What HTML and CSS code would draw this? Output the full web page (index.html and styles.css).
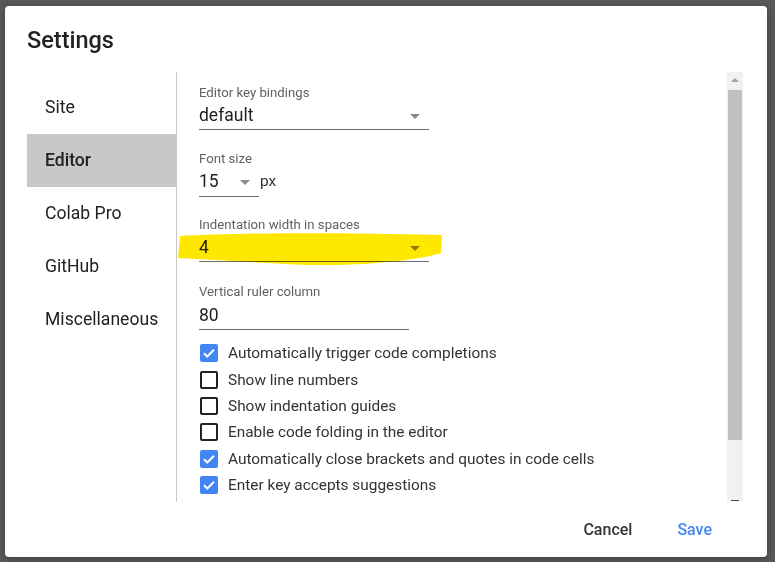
FILE: index.html
```html
<!DOCTYPE html>
<html>
<head>
<meta charset="utf-8">
<link rel="stylesheet" href="styles.css">
</head>
<body>
<div class="backdrop">
  <div class="dialog">
    <h1 class="title">Settings</h1>
    <div class="body">
      <nav class="nav">
        <div class="nav-item">Site</div>
        <div class="nav-item active">Editor</div>
        <div class="nav-item">Colab Pro</div>
        <div class="nav-item">GitHub</div>
        <div class="nav-item">Miscellaneous</div>
      </nav>
      <div class="content">
        <div class="field">
          <div class="label">Editor key bindings</div>
          <div class="select wide"><span>default</span><i class="caret"></i></div>
        </div>
        <div class="field">
          <div class="label">Font size</div>
          <div class="inline">
            <div class="select narrow"><span>15</span><i class="caret"></i></div>
            <span class="unit">px</span>
          </div>
        </div>
        <div class="field">
          <div class="label">Indentation width in spaces</div>
          <div class="select wide"><span>4</span><i class="caret"></i></div>
        </div>
        <div class="field ruler-field">
          <div class="label">Vertical ruler column</div>
          <div class="select ruler"><span>80</span></div>
        </div>
        <div class="checks">
          <label class="check"><span class="box on"><svg viewBox="0 0 18 18"><path d="M4 9.2l3.3 3.3L14 5.8" fill="none" stroke="#fff" stroke-width="2"/></svg></span>Automatically trigger code completions</label>
          <label class="check"><span class="box"></span>Show line numbers</label>
          <label class="check"><span class="box"></span>Show indentation guides</label>
          <label class="check"><span class="box"></span>Enable code folding in the editor</label>
          <label class="check"><span class="box on"><svg viewBox="0 0 18 18"><path d="M4 9.2l3.3 3.3L14 5.8" fill="none" stroke="#fff" stroke-width="2"/></svg></span>Automatically close brackets and quotes in code cells</label>
          <label class="check"><span class="box on"><svg viewBox="0 0 18 18"><path d="M4 9.2l3.3 3.3L14 5.8" fill="none" stroke="#fff" stroke-width="2"/></svg></span>Enter key accepts suggestions</label>
        </div>
        <svg class="highlight" viewBox="0 0 266 36" width="266" height="36"><path d="M3 5 C60 2 150 1 265 4 L264 22 C240 30 180 35 130 34 C90 32 40 29 1 27 Z" fill="#ffe800"/></svg>
      </div>
      <div class="scrollbar">
        <i class="sb-up"></i>
        <div class="sb-thumb"></div>
        <i class="sb-down"></i>
      </div>
    </div>
    <div class="footer">
      <button class="btn">Cancel</button>
      <button class="btn primary">Save</button>
    </div>
  </div>
</div>
</body>
</html>
```
FILE: styles.css
```css
html, body {
  margin: 0;
  padding: 0;
}
body {
  width: 775px;
  height: 562px;
  overflow: hidden;
  background: #595959;
  font-family: Roboto, "Liberation Sans", Arial, sans-serif;
}
.backdrop {
  padding: 6px 8px 5px 5px;
}
.dialog {
  width: 762px;
  height: 551px;
  box-sizing: border-box;
  background: #fff;
  border-radius: 4px;
  padding: 20px 24px 0 22px;
  display: flex;
  flex-direction: column;
  box-shadow: 0 2px 8px rgba(0,0,0,0.3);
}
.title {
  margin: 0 0 18px 0;
  font-size: 23.5px;
  line-height: 28px;
  font-weight: 500;
  color: #212121;
}
.body {
  display: flex;
  height: 430px;
}
.nav {
  width: 150px;
  border-right: 1px solid #c8c8c8;
  padding-top: 9px;
  box-sizing: border-box;
}
.nav-item {
  height: 53px;
  line-height: 53px;
  padding-left: 18px;
  font-size: 17.6px;
  color: #212121;
  width: 149px;
  box-sizing: border-box;
}
.nav-item.active {
  background: #c8c8c8;
  font-weight: 500;
}
.content {
  position: relative;
  flex: 1;
  padding: 13px 0 0 22px;
}
.field {
  margin-bottom: 21px;
}
.field.ruler-field {
  padding-top: 1px;
}
.label {
  font-size: 13.2px;
  line-height: 16px;
  color: #616161;
}
.select {
  position: relative;
  height: 29px;
  line-height: 29px;
  border-bottom: 1px solid #6b6b6b;
  font-size: 17.5px;
  color: #212121;
}
.field:first-child .select {
  height: 28px;
  line-height: 28px;
}
.field:nth-child(3) .select {
  height: 28px;
  line-height: 28px;
}
.field:nth-child(3) {
  margin-top: -1px;
}
.field.ruler-field .select {
  height: 29px;
  line-height: 31px;
}
.select span {
  position: relative;
  z-index: 1;
}
.wide { width: 230px; }
.narrow { width: 60px; }
.ruler { width: 210px; }
.inline {
  display: flex;
  align-items: flex-start;
}
.unit {
  font-size: 15.4px;
  line-height: 29px;
  color: #333;
  margin-left: 1px;
}
.caret {
  position: absolute;
  right: 9px;
  top: 13px;
  width: 0;
  height: 0;
  border-left: 5px solid transparent;
  border-right: 5px solid transparent;
  border-top: 5px solid #8a8a8a;
}
.checks {
  margin-top: -11px;
}
.check {
  display: flex;
  align-items: center;
  height: 26.4px;
  font-size: 15.4px;
  color: #333;
  padding-left: 1px;
}
.box {
  width: 18px;
  height: 18px;
  box-sizing: border-box;
  border: 2px solid #212121;
  border-radius: 2px;
  margin-right: 10px;
  flex: none;
  display: block;
}
.box.on {
  border: none;
  background: #4285f4;
}
.box svg {
  display: block;
  width: 18px;
  height: 18px;
}
.highlight {
  position: absolute;
  left: 0;
  top: 159px;
  mix-blend-mode: multiply;
  z-index: 2;
}
.scrollbar {
  width: 16px;
  background: #f1f1f1;
  position: relative;
  flex: none;
}
.sb-up {
  position: absolute;
  left: 4px;
  top: 6px;
  border-left: 4px solid transparent;
  border-right: 4px solid transparent;
  border-bottom: 4px solid #a3a3a3;
}
.sb-thumb {
  position: absolute;
  left: 1px;
  top: 18px;
  width: 14px;
  height: 350px;
  background: #c1c1c1;
}
.sb-down {
  position: absolute;
  left: 4px;
  bottom: 1px;
  width: 8px;
  height: 1px;
  background: #505050;
}
.footer {
  display: flex;
  justify-content: flex-end;
  align-items: center;
  height: 55px;
  padding-right: 15px;
  gap: 13px;
}
.btn {
  font-family: Roboto, "Liberation Sans", Arial, sans-serif;
  background: none;
  border: none;
  font-size: 16px;
  font-weight: 500;
  color: #333;
  padding: 8px 16px;
  margin: 0;
}
.btn.primary {
  color: #4285f4;
}
```
